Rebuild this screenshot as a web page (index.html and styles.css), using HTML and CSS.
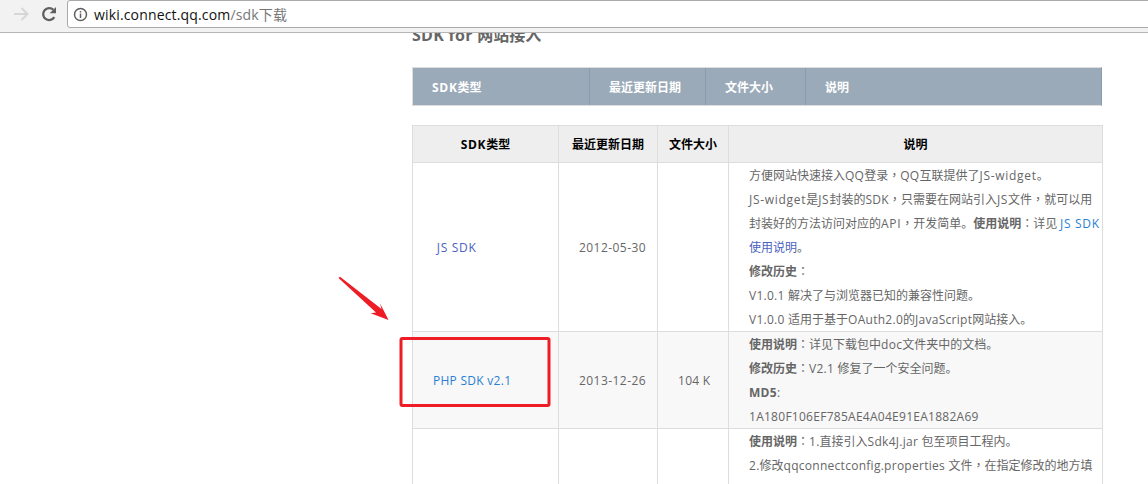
FILE: index.html
```html
<!DOCTYPE html>
<html lang="zh">
<head>
<meta charset="utf-8">
<title>sdk下载</title>
<link rel="stylesheet" href="styles.css">
</head>
<body>
<header class="toolbar">
  <svg class="nav-icon back" width="20" height="20" viewBox="0 0 20 20"><path d="M3 10H16.500M10.500 4L16.500 10L10.500 16" fill="none" stroke="#d6d6d6" stroke-width="2"/></svg>
  <svg class="nav-icon reload" width="20" height="20" viewBox="0 0 20 20"><path d="M15.300 13.200A6 6 0 1 1 14.400 5.800" fill="none" stroke="#5f5f5f" stroke-width="2.300"/><path d="M17 3V9.300H10.700Z" fill="#5f5f5f"/></svg>
  <div class="omnibox">
    <svg class="info" width="15" height="15" viewBox="0 0 15 15"><circle cx="7.500" cy="7.500" r="6" fill="none" stroke="#5f5f5f" stroke-width="1.500"/><path d="M7.500 6.500V11M7.500 4V5.500" stroke="#5f5f5f" stroke-width="1.500"/></svg>
    <span class="host">wiki.connect.qq.com</span><span class="path">/sdk下载</span>
  </div>
</header>
<main class="page">
  <h2 class="title"><span class="la">SDK for </span>网站接入</h2>
  <div class="bar">
    <div class="bar-cell bar-a"><span class="la wide">SDK</span>类型</div>
    <div class="bar-cell bar-b">最近更新日期</div>
    <div class="bar-cell bar-c">文件大小</div>
    <div class="bar-cell bar-d">说明</div>
  </div>
  <table class="sdk">
    <colgroup><col class="col-a"><col class="col-b"><col class="col-c"><col class="col-d"></colgroup>
    <thead>
      <tr><th><span class="la wide">SDK</span>类型</th><th>最近更新日期</th><th>文件大小</th><th>说明</th></tr>
    </thead>
    <tbody>
      <tr>
        <td><a class="visited la wide" href="#">&nbsp;JS SDK</a></td>
        <td><span class="la date">2012-05-30</span></td>
        <td></td>
        <td>方便网站快速接入<span class="la">QQ</span>登录<span class="pn" lang="zh-TW">，</span><span class="la">QQ</span>互联提供了<span class="la wide">JS-widget</span>。<br><span class="la wide">JS-widget</span>是<span class="la wide">JS</span>封装的<span class="la">SDK</span><span class="pn" lang="zh-TW">，</span>只需要在网站引入<span class="la wide">JS</span>文件<span class="pn" lang="zh-TW">，</span>就可以用<br>封装好的方法访问对应的<span class="la wide">API</span><span class="pn" lang="zh-TW">，</span>开发简单。<b>使用说明</b><span class="pn" lang="zh-TW">：</span>详见 <a class="la wide" href="#">JS SDK</a><br><a class="visited" href="#">使用说明</a>。<br><b>修改历史</b><span class="pn" lang="zh-TW">：</span><br><span class="la">V1.0.1 </span>解决了与浏览器已知的兼容性问题。<br><span class="la">V1.0.0 </span>适用于基于<span class="la">OAuth2.0</span>的<span class="la">JavaScript</span>网站接入。</td>
      </tr>
      <tr class="even">
        <td><a class="la" href="#">PHP SDK v2.1</a></td>
        <td><span class="la date">2013-12-26</span></td>
        <td><span class="la">104 K</span></td>
        <td><b>使用说明</b><span class="pn" lang="zh-TW">：</span>详见下载包中<span class="la">doc</span>文件夹中的文档。<br><b>修改历史</b><span class="pn" lang="zh-TW">：</span><span class="la">V2.1 </span>修复了一个安全问题。<br><b class="la">MD5</b><span class="la">:</span><br><span class="la">1A180F106EF785AE4A04E91EA1882A69</span></td>
      </tr>
      <tr class="cut">
        <td></td>
        <td></td>
        <td></td>
        <td><b>使用说明</b><span class="pn" lang="zh-TW">：</span><span class="la">1.</span>直接引入<span class="la">Sdk4J.jar </span>包至项目工程内。<br><span class="la">2.</span>修改<span class="la">qqconnectconfig.properties </span>文件<span class="pn" lang="zh-TW">，</span>在指定修改的地方填</td>
      </tr>
    </tbody>
  </table>
</main>
<svg class="markup" width="1148" height="484" viewBox="0 0 1148 484">
  <path d="M338.500 278L340 276.800L381.500 309L380 303.300L388.500 320L370.700 313.300L376 312.500Z" fill="#ee1c25"/>
  <rect x="401" y="338.500" width="148" height="67" rx="1.500" fill="none" stroke="#ee1c25" stroke-width="3"/>
</svg>
</body>
</html>
```
FILE: styles.css
```css
html, body {
  margin: 0;
  height: 100%;
  overflow: hidden;
  background: #fff;
}
body {
  position: relative;
  font-family: "Noto Sans CJK SC", sans-serif;
  font-size: 12px;
  color: #666;
}
.la {
  font-family: "Open Sans", sans-serif;
  letter-spacing: 0.27px;
  line-height: 1;
}
.la.wide { letter-spacing: 0.7px; }
.la.date { letter-spacing: 0.45px; }
.pn {
  font-family: "Noto Sans CJK TC", sans-serif;
  line-height: 1;
}
.toolbar {
  box-sizing: border-box;
  height: 33px;
  display: flex;
  align-items: flex-start;
  background: #f2f2f2;
  border-bottom: 1px solid #b5b5b5;
  position: relative;
  z-index: 1;
}
.nav-icon { flex: none; margin-top: 4px; }
.back { margin-left: 11px; }
.reload { margin-left: 8px; }
.omnibox {
  box-sizing: border-box;
  flex: 1;
  height: 28px;
  margin-left: 8px;
  margin-right: -4px;
  display: flex;
  align-items: center;
  background: #fff;
  border: 1px solid #a9a9a9;
  border-radius: 3px;
  font-family: "Open Sans", "Noto Sans CJK SC", sans-serif;
  font-size: 14px;
  letter-spacing: 0.16px;
}
.info { margin-left: 5px; margin-right: 6px; }
.host { color: #111; }
.path { color: #777; }
.page {
  padding-left: 412px;
  width: 690px;
}
.title {
  margin: -11px 0 0;
  font-size: 16px;
  line-height: 24px;
  font-weight: 700;
  color: #666;
}
.bar {
  box-sizing: border-box;
  display: flex;
  height: 39px;
  margin-top: 21px;
  background: #9aaab9;
  border: 1px solid #ddd;
  border-right-color: #8a9bb0;
  color: #fff;
  font-weight: 700;
  line-height: 37px;
}
.bar-cell {
  box-sizing: border-box;
  padding-left: 19px;
  border-right: 1px solid #8a9bb0;
}
.bar-a { width: 177px; }
.bar-b { width: 116px; }
.bar-c { width: 100px; }
.bar-d { flex: 1; border-right: 0; }
.sdk {
  width: 690px;
  margin-top: 19px;
  border-collapse: collapse;
  table-layout: fixed;
}
.col-a { width: 146px; }
.col-b { width: 99px; }
.col-c { width: 71px; }
.col-d { width: 374px; }
.sdk th, .sdk td {
  border: 1px solid #ddd;
  line-height: 24px;
}
.sdk th {
  height: 36px;
  padding: 0;
  background: #eee;
  color: #000;
  font-weight: 700;
  text-align: center;
}
.sdk td {
  padding: 0 0 0 20px;
  vertical-align: middle;
  white-space: nowrap;
}
.sdk .cut td {
  height: 120px;
  vertical-align: top;
}
.even td { background: #f8f8f8; }
b { font-weight: 700; }
a { color: #2a7fd4; text-decoration: none; }
a.visited { color: #4a62c0; }
.markup {
  position: absolute;
  left: 0;
  top: 0;
  pointer-events: none;
}
```
